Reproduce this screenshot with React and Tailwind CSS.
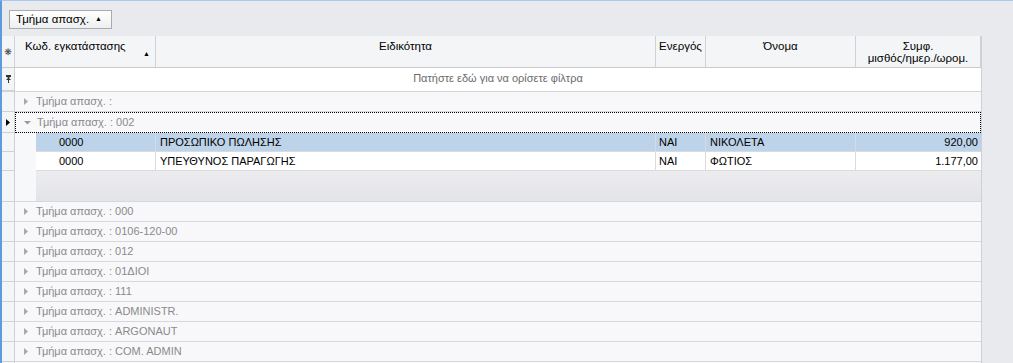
const font = { fontFamily: '"Liberation Sans", "DejaVu Sans", sans-serif' };

const columns = [
  { key: "code", label: "Κωδ. εγκατάστασης", width: "w-[141px]", sort: true },
  { key: "spec", label: "Ειδικότητα", width: "w-[500px]" },
  { key: "active", label: "Ενεργός", width: "w-[50px]" },
  { key: "name", label: "Όνομα", width: "w-[150px]" },
  { key: "pay", label: "Συμφ.", label2: "μισθός/ημερ./ωρομ.", width: "w-[125px]" },
];

const rows = [
  { code: "0000", spec: "ΠΡΟΣΩΠΙΚΟ ΠΩΛΗΣΗΣ", active: "ΝΑΙ", name: "ΝΙΚΟΛΕΤΑ", pay: "920,00", selected: true },
  { code: "0000", spec: "ΥΠΕΥΘΥΝΟΣ ΠΑΡΑΓΩΓΗΣ", active: "ΝΑΙ", name: "ΦΩΤΙΟΣ", pay: "1.177,00" },
];

const groups = ["000", "0106-120-00", "012", "01ΔΙΟΙ", "111", "ADMINISTR.", "ARGONAUT", "COM. ADMIN"];

function RightTri({ className }) {
  return (
    <svg width="5" height="7" viewBox="0 0 5 7" className={className}>
      <path d="M0 0 L4 3.5 L0 7 Z" fill="currentColor" />
    </svg>
  );
}

function DownTri() {
  return (
    <svg width="7" height="5" viewBox="0 0 7 5">
      <path d="M0 1 L7 1 L3.5 4.5 Z" fill="#9a9a9a" />
    </svg>
  );
}

function Indicator({ h, children }) {
  return (
    <div className={`w-[13px] ${h} shrink-0 border-b border-r border-[#cfd1d5] bg-[#f4f5f7] flex items-center justify-center`}>
      {children}
    </div>
  );
}

function GroupRow({ label, expanded, focused }) {
  const h = focused ? "h-[21px]" : "h-[20px]";
  return (
    <div className={`flex ${h}`}>
      <Indicator h={h}>{focused && <RightTri className="text-black" />}</Indicator>
      <div
        className={`flex-1 flex items-center bg-[#f8f8fa] text-[#8a8a8a] text-[11px] ${
          focused ? "border border-dotted border-black" : "border-b border-[#d7d8dc]"
        }`}
      >
        <div className="w-[21px] flex justify-center pl-[2px]">
          {expanded ? <DownTri /> : <RightTri className="text-[#a8a8a8]" />}
        </div>
        {label !== null && <span>Τμήμα απασχ. : {label}</span>}
      </div>
    </div>
  );
}

function App() {
  return (
    <div
      className="w-[1013px] h-[363px] overflow-hidden bg-[#e9eaee] border-l-2 border-t border-l-[#5d9be0] border-t-[#a9c9ee] text-black"
      style={font}
    >
      <div className="h-[35px] pl-[7px] pt-[9px]">
        <div className="w-[103px] h-[19px] flex items-center justify-between pl-[6px] pr-[6px] border border-[#a9abaf] bg-gradient-to-b from-white to-[#eeeff1] text-[11.5px]">
          <span>Τμήμα απασχ.</span>
          <span className="text-[7px] pr-[3px]">▲</span>
        </div>
      </div>

      <div className="w-[980px] border-r border-[#cdd0d4]">
        <div className="flex h-[32px] bg-[#f4f5f7] border-b border-[#c8cbd0] text-[11.5px]">
          <div className="w-[13px] border-r border-[#cfd1d5] flex items-center justify-center text-[9px] text-[#444] pt-[2px]">
            ❋
          </div>
          {columns.map((c) => (
            <div
              key={c.key}
              className={`${c.width} shrink-0 border-r border-[#cfd1d5] pt-[4px] leading-[12px] ${
                c.sort ? "pl-[10px] relative" : "text-center"
              }`}
            >
              <div>{c.label}</div>
              {c.label2 && <div>{c.label2}</div>}
              {c.sort && <span className="absolute right-[5px] top-[12px] text-[7px]">▲</span>}
            </div>
          ))}
        </div>

        <div className="flex h-[24px] bg-white border-b border-[#d2d4d8]">
          <Indicator h="h-[23px]">
            <svg width="5" height="8" viewBox="0 0 5 8">
              <path d="M0 0 H5 V2 H3.5 V4 H4.5 V5 H3 V8 H2 V5 H0.5 V4 H1.5 V2 H0 Z" fill="#333" />
            </svg>
          </Indicator>
          <div className="flex-1 flex items-center justify-center text-[11px] text-[#6b6b6b] pb-[2px]">
            Πατήστε εδώ για να ορίσετε φίλτρα
          </div>
        </div>

        <GroupRow label="" />
        <GroupRow label="002" expanded focused />

        {rows.map((r, i) => (
          <div key={i} className="flex h-[19px] text-[11px]">
            <Indicator h="h-[19px]" />
            <div className="w-[21px] shrink-0 bg-[#f7f8fa]" />
            <div className={`flex flex-1 border-b border-[#dadbde] ${r.selected ? "bg-[#bcd3ea]" : "bg-white"}`}>
              <div className="w-[120px] shrink-0 border-r border-[#dadbde] pl-[23px] flex items-center">{r.code}</div>
              <div className="w-[500px] shrink-0 border-r border-[#dadbde] pl-[4px] flex items-center">{r.spec}</div>
              <div className="w-[50px] shrink-0 border-r border-[#dadbde] pl-[3px] flex items-center">{r.active}</div>
              <div className="w-[150px] shrink-0 border-r border-[#dadbde] pl-[4px] flex items-center">{r.name}</div>
              <div className="flex-1 pr-[3px] flex items-center justify-end">{r.pay}</div>
            </div>
          </div>
        ))}

        <div className="flex h-[31px]">
          <Indicator h="h-[31px]" />
          <div className="w-[21px] shrink-0 bg-[#f7f8fa] border-b border-[#d7d8dc]" />
          <div className="flex-1 bg-gradient-to-b from-[#ececef] to-[#e3e4e8] border-b border-[#d7d8dc]" />
        </div>

        {groups.map((g) => (
          <GroupRow key={g} label={g} />
        ))}
        <GroupRow label={null} />
      </div>
    </div>
  );
}

export default App;
